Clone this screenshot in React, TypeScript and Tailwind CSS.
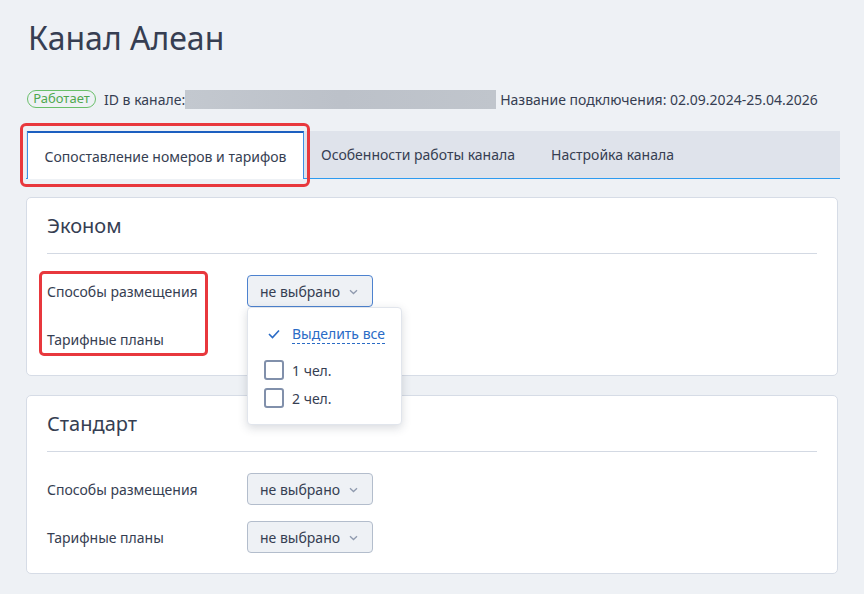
import React from "react";

const font = { fontFamily: '"Noto Sans", "Open Sans", Arial, sans-serif' };

function Chevron() {
  return (
    <svg width="9" height="6" viewBox="0 0 9 6" className="ml-[9px] mt-[1px]">
      <path d="M1 1.2 L4.5 4.5 L8 1.2" fill="none" stroke="#8f9aae" strokeWidth="1.3" />
    </svg>
  );
}

function SelectBtn({ focused }: { focused?: boolean }) {
  return (
    <div
      className={
        "flex h-[32px] w-[126px] items-center rounded-[4px] border bg-[#eef1f5] pl-[12px] text-[14px] text-[#363e52] " +
        (focused ? "border-[#4d82cf]" : "border-[#b3bdcc]")
      }
    >
      не выбрано
      <Chevron />
    </div>
  );
}

function Checkbox() {
  return <div className="h-[20px] w-[20px] rounded-[3px] border-2 border-[#8190ab] bg-white" />;
}

function Card({ title, open }: { title: string; open?: boolean }) {
  return (
    <div className="w-[812px] rounded-[5px] border border-[#d6dce6] bg-white px-[20px] pb-[20px] pt-[14px]">
      <div className="text-[20px] leading-[28px] text-[#363e52]">{title}</div>
      <div className="mt-[13px] h-px bg-[#d3d9e3]" />
      <div className="relative mt-[21px] flex flex-col gap-[16px]">
        {open && (
          <div className="pointer-events-none absolute left-[-8px] top-[-4px] h-[85px] w-[169px] rounded-[5px] border-[3px] border-[#e8383d]" />
        )}
        <div className="flex h-[32px] items-center">
          <div className="w-[200px] text-[14px] text-[#363e52]">Способы размещения</div>
          <div className="relative">
            <SelectBtn focused={open} />
            {open && (
              <div className="absolute left-[0px] top-[32px] z-10 w-[155px] rounded-[4px] border border-[#e1e5ec] bg-white pb-[12px] pl-[16px] pt-[13px] shadow-[0_3px_10px_rgba(40,50,70,0.18)]">
                <div className="flex h-[26px] items-center">
                  <svg width="20" height="12" viewBox="0 0 20 12" className="mr-[8px]">
                    <path d="M5 6 L8.5 9.5 L15 2.5" fill="none" stroke="#2a6bc6" strokeWidth="1.6" />
                  </svg>
                  <span className="border-b border-dashed border-[#2a6bc6] text-[14px] leading-[18px] text-[#2a6bc6]">
                    Выделить все
                  </span>
                </div>
                <div className="mt-[9px] flex h-[28px] items-center gap-[8px] text-[14px] text-[#363e52]">
                  <Checkbox />
                  1 чел.
                </div>
                <div className="flex h-[28px] items-center gap-[8px] text-[14px] text-[#363e52]">
                  <Checkbox />
                  2 чел.
                </div>
              </div>
            )}
          </div>
        </div>
        <div className="flex h-[32px] items-center">
          <div className="w-[200px] text-[14px] text-[#363e52]">Тарифные планы</div>
          {open ? <div className="h-[32px] w-[126px]" /> : <SelectBtn />}
        </div>
      </div>
    </div>
  );
}

export default function App() {
  return (
    <div style={font} className="min-h-[594px] bg-[#eef1f5] px-[26px] pt-[14px]">
      <h1 className="pl-[2px] text-[32px] font-normal leading-[48px] text-[#363e52]">Канал Алеан</h1>
      <div className="mt-[27px] flex h-[20px] items-center text-[14px] text-[#363e52]">
        <span className="ml-[1px] flex h-[18px] w-[69px] items-center justify-center rounded-full border border-[#6abf6a] text-[13px] text-[#4ea84e]">
          Работает
        </span>
        <span className="ml-[8px]">ID в канале:</span>
        <span className="h-[19px] w-[311px] bg-gradient-to-r from-[#c3c8cf] via-[#bcc1c9] to-[#c0c5cc]" />
        <span className="ml-[4px]">Название подключения: 02.09.2024-25.04.2026</span>
      </div>
      <div className="mt-[22px] flex h-[48px] w-[814px] border-b border-[#2d9bf0] bg-[#dfe3eb] pl-[1px] text-[14px] text-[#363e52]">
        <div className="relative -mb-px flex h-[48px] w-[277px] items-center justify-center border-x border-t-2 border-x-[#3d8fe6] border-t-[#1c5fc0] bg-white">
          Сопоставление номеров и тарифов
          <div className="pointer-events-none absolute bottom-[-8px] left-[-8px] right-[-7px] top-[-10px] rounded-[6px] border-[3px] border-[#e8383d]" />
        </div>
        <div className="flex items-center px-[17px]">Особенности работы канала</div>
        <div className="flex items-center pl-[19px] pr-[17px]">Настройка канала</div>
      </div>
      <div className="mt-[18px]">
        <Card title="Эконом" open />
      </div>
      <div className="mt-[19px] pb-[20px]">
        <Card title="Стандарт" />
      </div>
    </div>
  );
}
